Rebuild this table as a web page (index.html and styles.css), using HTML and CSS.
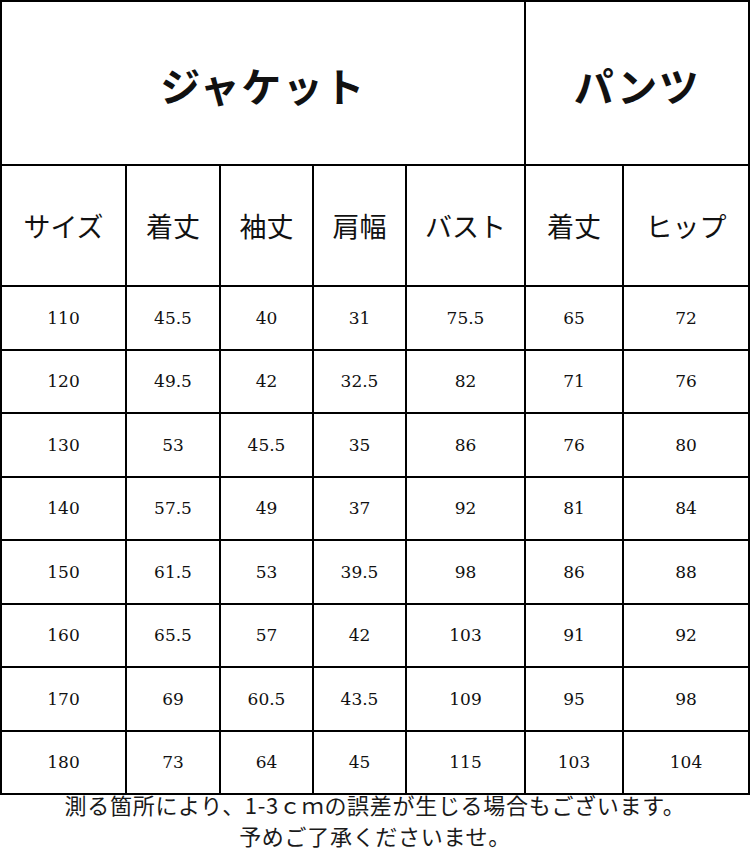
FILE: index.html
```html
<!DOCTYPE html>
<html lang="ja">
<head>
<meta charset="utf-8">
<link rel="stylesheet" href="styles.css">
</head>
<body>
<div class="chart">
  <div class="cell title span5">ジャケット</div>
  <div class="cell title span2">パンツ</div>

  <div class="cell head">サイズ</div>
  <div class="cell head">着丈</div>
  <div class="cell head">袖丈</div>
  <div class="cell head">肩幅</div>
  <div class="cell head">バスト</div>
  <div class="cell head">着丈</div>
  <div class="cell head">ヒップ</div>

  <div class="cell num">110</div><div class="cell num">45.5</div><div class="cell num">40</div><div class="cell num">31</div><div class="cell num">75.5</div><div class="cell num">65</div><div class="cell num">72</div>
  <div class="cell num">120</div><div class="cell num">49.5</div><div class="cell num">42</div><div class="cell num">32.5</div><div class="cell num">82</div><div class="cell num">71</div><div class="cell num">76</div>
  <div class="cell num">130</div><div class="cell num">53</div><div class="cell num">45.5</div><div class="cell num">35</div><div class="cell num">86</div><div class="cell num">76</div><div class="cell num">80</div>
  <div class="cell num">140</div><div class="cell num">57.5</div><div class="cell num">49</div><div class="cell num">37</div><div class="cell num">92</div><div class="cell num">81</div><div class="cell num">84</div>
  <div class="cell num">150</div><div class="cell num">61.5</div><div class="cell num">53</div><div class="cell num">39.5</div><div class="cell num">98</div><div class="cell num">86</div><div class="cell num">88</div>
  <div class="cell num">160</div><div class="cell num">65.5</div><div class="cell num">57</div><div class="cell num">42</div><div class="cell num">103</div><div class="cell num">91</div><div class="cell num">92</div>
  <div class="cell num">170</div><div class="cell num">69</div><div class="cell num">60.5</div><div class="cell num">43.5</div><div class="cell num">109</div><div class="cell num">95</div><div class="cell num">98</div>
  <div class="cell num">180</div><div class="cell num">73</div><div class="cell num">64</div><div class="cell num">45</div><div class="cell num">115</div><div class="cell num">103</div><div class="cell num">104</div>
</div>
<div class="note">
  <p>測る箇所により、1-3ｃｍの誤差が生じる場合もございます。</p>
  <p>予めご了承くださいませ。</p>
</div>
</body>
</html>
```

FILE: styles.css
```css
html, body {
  margin: 0;
  padding: 0;
  background: #fff;
}

body {
  width: 750px;
  font-family: "Noto Sans CJK JP", "DejaVu Serif", serif;
  color: #111;
}

.chart {
  display: grid;
  grid-template-columns: 123px 92px 91px 91px 117px 96px 124px;
  grid-template-rows: 162px 119px repeat(8, 61.5px);
  gap: 2px;
  padding: 2px;
  background: #000;
  width: 746px;
}

.cell {
  background: #fff;
  display: flex;
  align-items: center;
  justify-content: center;
}

.span5 {
  grid-column: span 5;
}

.span2 {
  grid-column: span 2;
}

.title {
  font-size: 40px;
  font-weight: 700;
  letter-spacing: 1.5px;
  padding-top: 4px;
}

.head {
  font-size: 27px;
  font-weight: 400;
  letter-spacing: 0;
}

.num {
  font-family: "DejaVu Serif", "Liberation Serif", serif;
  font-size: 17px;
}

.note {
  text-align: center;
  font-size: 22px;
  line-height: 31px;
  letter-spacing: 0.7px;
  margin-top: -6px;
  color: #1a1a1a;
}

.note p {
  margin: 0;
}
```
